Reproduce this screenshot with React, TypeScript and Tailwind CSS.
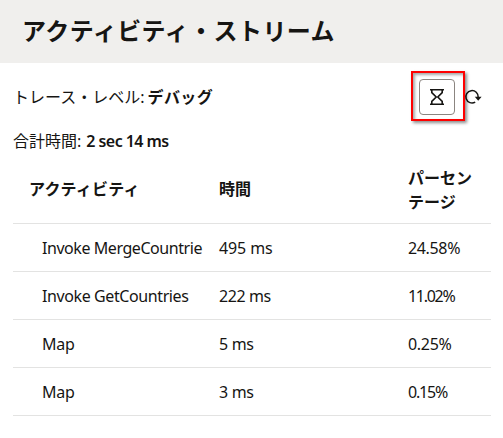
const rows = [
  { name: 'Invoke MergeCountrie', time: '495 ms', pct: '24.58%', n: 'tracking-[-0.44px]', t: 'tracking-[-0.1px]', p: 'tracking-[-0.35px]' },
  { name: 'Invoke GetCountries', time: '222 ms', pct: '11.02%', n: 'tracking-[-0.4px]', t: 'tracking-[-0.4px]', p: 'tracking-[-1.3px]' },
  { name: 'Map', time: '5 ms', pct: '0.25%', n: 'tracking-[-0.3px]', t: 'tracking-[-0.3px]', p: 'tracking-[-0.3px]' },
  { name: 'Map', time: '3 ms', pct: '0.15%', n: 'tracking-[-0.3px]', t: 'tracking-[-0.3px]', p: 'tracking-[-1.2px]' },
];

const grid = 'grid grid-cols-[206px_189px_83px] border-b border-[#e3e3e2]';

function Hourglass() {
  return (
    <svg width="14" height="18" viewBox="0 0 14 18" fill="none" stroke="#161513" strokeWidth="1.6">
      <path d="M0 1.8H14M0 16.2H14" />
      <path d="M1.8 1.8V4.6L6.2 9L1.8 13.4V16.2M12.2 1.8V4.6L7.8 9L12.2 13.4V16.2" />
    </svg>
  );
}

function Refresh() {
  return (
    <svg width="18" height="18" viewBox="0 0 18 18" fill="none" stroke="#161513" strokeWidth="1.5">
      <path d="M11.2 14.1A6.2 6.2 0 1 1 14.2 9.2" />
      <path d="M10.8 8.8H17.6L14.2 12.8Z" fill="#161513" stroke="none" />
    </svg>
  );
}

export default function App() {
  return (
    <div className="h-[438px] w-[503px] overflow-hidden bg-white font-['Noto_Sans','Noto_Sans_CJK_JP',sans-serif] text-base text-[#161513]">
      <header className="flex h-[63px] items-center bg-[#f0efed] pb-1 pl-[22px]">
        <h1 className="font-['Noto_Sans_CJK_JP',sans-serif] text-2xl leading-8 font-bold tracking-[0.45px]">アクティビティ・ストリーム</h1>
      </header>

      <div className="mt-4 flex h-9 items-center pl-[13px]">
        <p className="w-[406px] whitespace-nowrap">
          トレース・レベル:<b className="ml-[3px] tracking-[0.4px]">デバッグ</b>
        </p>
        <div className="relative">
          <button className="flex size-9 items-center justify-center rounded border border-[#8b8580]">
            <Hourglass />
          </button>
          <div className="pointer-events-none absolute -top-2 -left-2 h-[50px] w-[54px] border-2 border-[#ff0000] shadow-[2px_2px_3px_rgba(0,0,0,0.45),inset_2px_2px_3px_rgba(0,0,0,0.35)]" />
        </div>
        <button className="ml-[9px]">
          <Refresh />
        </button>
      </div>

      <p className="mt-[14px] pl-[13px] leading-6">
        合計時間:
        <span className="ml-[5px] font-semibold tracking-[-0.55px]">2 sec 14 ms</span>
      </p>

      <div className="ml-[13px] w-[478px]">
        <div className={`${grid} h-[71px] items-center font-bold`}>
          <span className="pt-0.5 pl-4 tracking-[0.2px]">アクティビティ</span>
          <span className="pt-0.5">時間</span>
          <span className="pt-1 leading-6">パーセン<br />テージ</span>
        </div>
        {rows.map((r, i) => (
          <div key={i} className={`${grid} h-12 items-center`}>
            <span className={`pl-[29px] whitespace-nowrap ${r.n}`}>{r.name}</span>
            <span className={r.t}>{r.time}</span>
            <span className={r.p}>{r.pct}</span>
          </div>
        ))}
      </div>
    </div>
  );
}
